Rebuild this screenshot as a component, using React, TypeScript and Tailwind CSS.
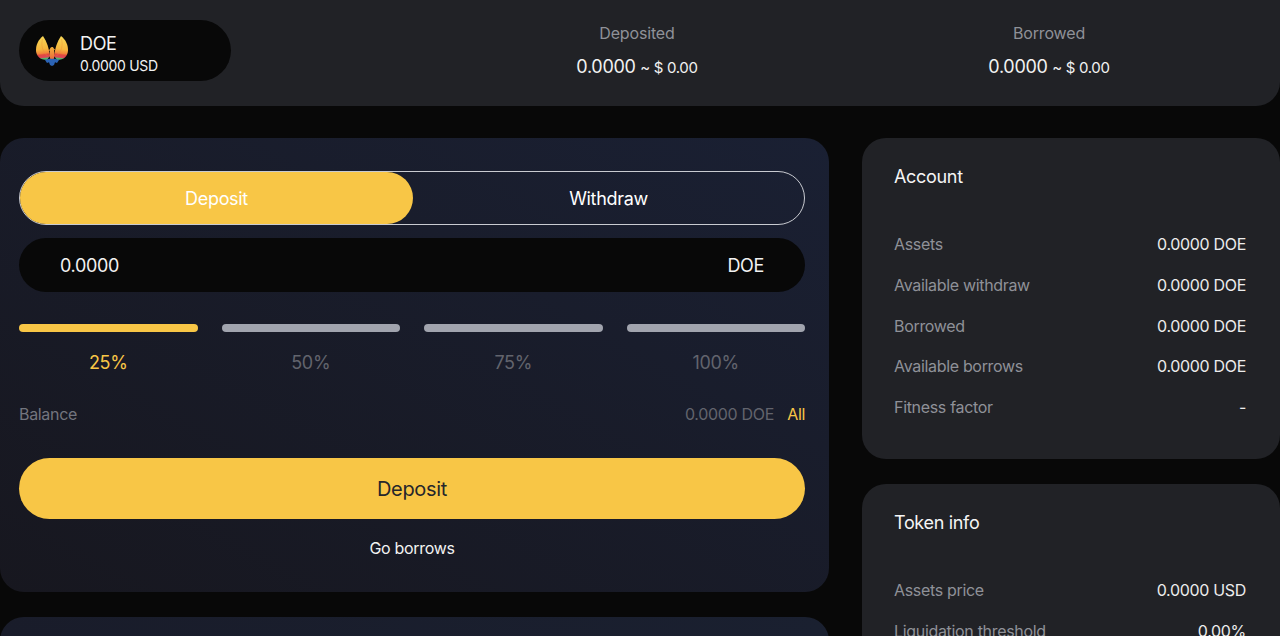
import React from "react";

const percents = ["25%", "50%", "75%", "100%"];

const accountRows = [
  ["Assets", "0.0000 DOE"],
  ["Available withdraw", "0.0000 DOE"],
  ["Borrowed", "0.0000 DOE"],
  ["Available borrows", "0.0000 DOE"],
  ["Fitness factor", "-"],
];

const tokenRows = [
  ["Assets price", "0.0000 USD"],
  ["Liquidation threshold", "0.00%"],
];

function Logo() {
  return (
    <svg width="32" height="30" viewBox="0 0 32 30" className="shrink-0">
      <defs>
        <linearGradient id="wing-l" gradientUnits="userSpaceOnUse" x1="6" y1="0" x2="9" y2="26">
          <stop offset="0" stopColor="#f8d957" />
          <stop offset="0.5" stopColor="#f6b63e" />
          <stop offset="0.66" stopColor="#f0853a" />
          <stop offset="0.72" stopColor="#e2473f" />
          <stop offset="0.82" stopColor="#d9485a" />
          <stop offset="0.86" stopColor="#58b368" />
          <stop offset="1" stopColor="#2f9f9c" />
        </linearGradient>
        <linearGradient id="wing-r" gradientUnits="userSpaceOnUse" x1="26" y1="0" x2="23" y2="26">
          <stop offset="0" stopColor="#f8d957" />
          <stop offset="0.5" stopColor="#f6b63e" />
          <stop offset="0.66" stopColor="#f0853a" />
          <stop offset="0.72" stopColor="#e2473f" />
          <stop offset="0.82" stopColor="#d9485a" />
          <stop offset="0.86" stopColor="#58b368" />
          <stop offset="1" stopColor="#2f9f9c" />
        </linearGradient>
        <linearGradient id="body" x1="0" y1="0" x2="0" y2="1">
          <stop offset="0" stopColor="#f5b23c" />
          <stop offset="1" stopColor="#e8643a" />
        </linearGradient>
      </defs>
      <path d="M7 0 C2 4 0 9 0 14 C0 20 4 24 11 24 L14 20 C13.500 16 12.500 12 11.500 9 C10.500 6 9 3 7 0 Z" fill="url(#wing-l)" />
      <path d="M25 0 C30 4 32 9 32 14 C32 20 28 24 21 24 L18 20 C18.500 16 19.500 12 20.500 9 C21.500 6 23 3 25 0 Z" fill="url(#wing-r)" />
      <path d="M6.500 3 C5 9 6 15 11.500 20" stroke="#e8913a" strokeWidth="0.6" fill="none" opacity="0.7" />
      <path d="M25.500 3 C27 9 26 15 20.500 20" stroke="#e8913a" strokeWidth="0.6" fill="none" opacity="0.7" />
      <path d="M16 11 C14.800 11 14 12 14 13 L12.500 14.500 L14 14.800 L13.500 20 L14.500 24 L17.500 24 L18.500 20 L18 14.500 L19 13.500 L17.800 12.500 C17.700 11.600 17 11 16 11 Z" fill="url(#body)" />
      <path d="M9 24 L13 22.800 L19 22.800 L23 24 L21 27 L19 26.200 L18 29 L16 30 L14 29 L13 26.200 L11 27 Z" fill="#2b63b5" />
    </svg>
  );
}

function StatBlock({ label, value, usd }: { label: string; value: string; usd: string }) {
  return (
    <div className="flex flex-col items-center">
      <span className="text-[16px] leading-[24px] tracking-[-0.01em] text-[#8f9198]">{label}</span>
      <span className="mt-[10px] text-[18px] leading-[24px] text-[#f2f2f2]">
        {value} <span className="text-[15px]">~ $ {usd}</span>
      </span>
    </div>
  );
}

function InfoCard({ title, rows, className }: { title: string; rows: string[][]; className: string }) {
  return (
    <div className={`rounded-[24px] bg-[#212226] pl-[32px] pr-[34px] pt-[26px] ${className}`}>
      <h2 className="text-[18px] leading-[26px] font-normal text-[#f5f5f5]">{title}</h2>
      <div className="mt-[42px] flex flex-col gap-[16.75px]">
        {rows.map(([label, value]) => (
          <div key={label} className="flex items-center justify-between text-[16px] leading-[24px]">
            <span className="text-[#8f9198]">{label}</span>
            <span className="text-[#ececec]">{value}</span>
          </div>
        ))}
      </div>
    </div>
  );
}

export default function App() {
  return (
    <div className="h-screen overflow-hidden bg-[#080808] font-['Inter',sans-serif] tracking-[-0.02em]">
      {/* Top bar */}
      <div className="grid h-[106px] grid-cols-[412px_412px_412px] items-start rounded-b-[24px] bg-[#212226] pl-[19px]">
        <div className="mt-[20px] flex h-[61px] w-[212px] items-center gap-[12px] rounded-full bg-[#080808] pl-[17px]">
          <Logo />
          <div className="flex flex-col pt-[6px]">
            <span className="text-[18px] leading-[24px] text-[#f2f2f2]">DOE</span>
            <span className="text-[14px] leading-[20px] text-[#f2f2f2]">0.0000 USD</span>
          </div>
        </div>
        <div className="mt-[21px]">
          <StatBlock label="Deposited" value="0.0000" usd="0.00" />
        </div>
        <div className="mt-[21px]">
          <StatBlock label="Borrowed" value="0.0000" usd="0.00" />
        </div>
      </div>

      <div className="mt-[32px] grid grid-cols-[829px_418px] gap-x-[33px]">
        {/* Left column */}
        <div className="flex flex-col gap-[25px]">
          <div className="h-[454px] rounded-[24px] bg-gradient-to-tr from-[#17171f] to-[#1a2033] pt-[33px] pl-[19px] pr-[24px]">
            <div className="flex h-[54px] rounded-full border border-[#c9cbd1] text-[18px]">
              <button className="w-[393px] rounded-full bg-[#f8c646] text-white">Deposit</button>
              <button className="flex-1 text-white">Withdraw</button>
            </div>

            <div className="mt-[13px] flex h-[54px] items-center justify-between rounded-full bg-[#080808] px-[41px] text-[18px] text-[#f2f2f2]">
              <span>0.0000</span>
              <span>DOE</span>
            </div>

            <div className="mt-[32px] grid grid-cols-4 gap-x-[24px]">
              {percents.map((p, i) => (
                <div key={p} className="flex flex-col items-center">
                  <div className={`h-[8px] w-full rounded-full ${i === 0 ? "bg-[#f8c646]" : "bg-[#a1a4ae]"}`} />
                  <span className={`mt-[19px] text-[18px] leading-[24px] ${i === 0 ? "text-[#f8c646]" : "text-[#62646d]"}`}>{p}</span>
                </div>
              ))}
            </div>

            <div className="mt-[27px] flex items-center justify-between text-[16px] leading-[24px]">
              <span className="text-[#73757e]">Balance</span>
              <span className="text-[#62646d]">
                0.0000 DOE <span className="ml-[9px] text-[#f8c646]">All</span>
              </span>
            </div>

            <button className="mt-[32px] h-[61px] w-full rounded-full bg-[#f8c646] text-[20px] text-[#26262b]">Deposit</button>

            <div className="mt-[17px] text-center text-[16px] leading-[24px] text-[#f2f2f2]">Go borrows</div>
          </div>

          <div className="h-[200px] rounded-[24px] bg-gradient-to-r from-[#191c2a] to-[#1a2030]" />
        </div>

        {/* Right column */}
        <div className="flex flex-col gap-[25px]">
          <InfoCard title="Account" rows={accountRows} className="h-[321px]" />
          <InfoCard title="Token info" rows={tokenRows} className="h-[300px]" />
        </div>
      </div>
    </div>
  );
}
